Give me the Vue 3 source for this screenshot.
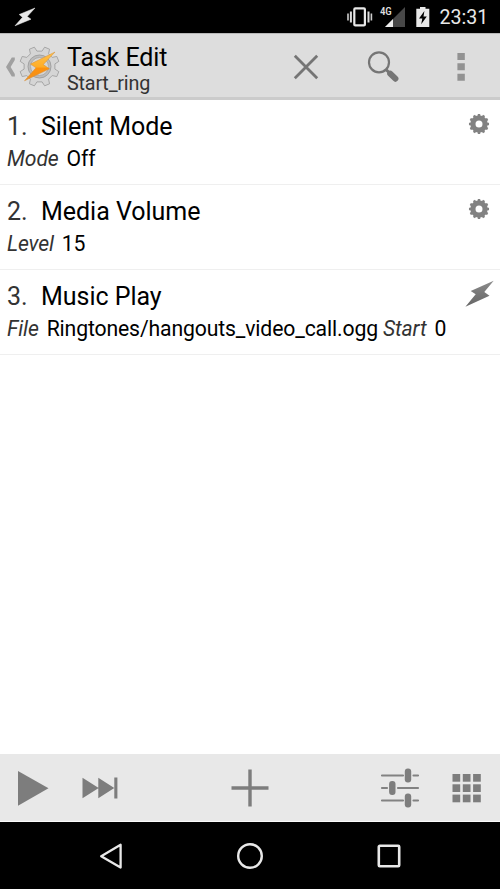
<script setup>
function gearPath(cx, cy, teeth, outer, inner, tipShare, baseShare) {
  const step = (Math.PI * 2) / teeth
  const pts = []
  for (let i = 0; i < teeth; i++) {
    const a = i * step - Math.PI / 2 + (teeth === 8 ? step / 2 : 0)
    for (const [offset, r] of [[-baseShare, inner], [-tipShare, outer], [tipShare, outer], [baseShare, inner]]) {
      const t = a + offset * step
      pts.push(`${(cx + Math.cos(t) * r).toFixed(2)} ${(cy + Math.sin(t) * r).toFixed(2)}`)
    }
  }
  return `M${pts.join('L')}Z`
}

const smallGear = gearPath(15, 14, 12, 10.1, 8.7, 0.22, 0.3) + 'M11.5 14a3.5 3.5 0 1 0 7 0a3.5 3.5 0 1 0 -7 0Z'
const appGear = gearPath(20.5, 20.5, 8, 20, 15.6, 0.17, 0.29)

const actions = [
  { name: 'Silent Mode', icon: 'gear', args: [['Mode', 'Off']] },
  { name: 'Media Volume', icon: 'gear', args: [['Level', '15']] },
  { name: 'Music Play', icon: 'bolt', args: [['File', 'Ringtones/hangouts_video_call.ogg'], ['Start', '0']] }
]
</script>

<template>
  <div class="screen">
    <div class="status">
      <svg class="status-bolt" width="22" height="20" viewBox="0 0 22 20"><path d="M21 1L5.2 7.5L8.5 10.3L1 18.8L17 12.2L13.2 9.5Z" fill="#e8e8e8" stroke="#e8e8e8" stroke-width=".5" /></svg>
      <svg class="vibrate" width="28" height="20" viewBox="0 0 28 20">
        <rect x="8.3" y="1.4" width="10.6" height="17" rx="1" fill="none" stroke="#e8e8e8" stroke-width="2.2" />
        <path d="M4.9 4.5v11M22.5 4.5v11" stroke="#ddd" stroke-width="2" />
        <path d="M2 6.5v7M25.4 6.5v7" stroke="#ccc" stroke-width="1.6" />
      </svg>
      <div class="signal">
        <span class="network">4G</span>
        <svg width="20" height="20" viewBox="0 0 20 20"><path d="M0 20H20V0Z" fill="#484848" /><path d="M0 20H8V12Z" fill="#eee" /></svg>
      </div>
      <svg class="battery" width="14" height="20" viewBox="0 0 14 20">
        <path d="M4 0h5.5v1.8H13.3V20H.3V1.8H4Z" fill="#e8e8e8" />
        <path d="M8.4 4L3 11.6H6.3L5.2 17.2L10.8 9.5H7.5Z" fill="#000" />
      </svg>
      <span class="clock">23:31</span>
    </div>

    <header class="header">
      <svg class="back" width="12" height="24" viewBox="0 0 12 24"><path d="M9.8 2.6L6.8 2.6L1 12L6.8 21.4L9.8 21.4L9.8 19L5.6 12L9.8 5Z" fill="#a0a0a0" /></svg>
      <svg class="app-icon" width="41" height="41" viewBox="0 0 41 41">
        <defs>
          <linearGradient id="orange" x1="0" y1="0" x2="0" y2="1"><stop offset="0" stop-color="#ffc14a" /><stop offset=".52" stop-color="#ffad27" /><stop offset=".56" stop-color="#ff920d" /><stop offset="1" stop-color="#ef9020" /></linearGradient>
        </defs>
        <path :d="appGear" fill="#d5d5d5" stroke="#a0a0a0" stroke-width=".9" stroke-linejoin="round" />
        <circle cx="20.5" cy="20.5" r="11.5" fill="#bcbcbc" stroke="#a2a2a2" />
        <circle cx="20.5" cy="20.5" r="9" fill="#d6d6d6" stroke="#acacac" />
        <path d="M36 6L11.5 18L17 21.8L5.5 34.8L30.5 22.8L24.3 18.6Z" fill="url(#orange)" stroke="#d58f38" stroke-width=".5" />
      </svg>
      <div class="titles">
        <h1>Task Edit</h1>
        <p>Start_ring</p>
      </div>
      <svg class="close" width="26" height="26" viewBox="0 0 26 26"><path d="M1.8 1.8L24.2 24.2M24.2 1.8L1.8 24.2" stroke="#757575" stroke-width="2.8" /></svg>
      <svg class="search" width="34" height="34" viewBox="0 0 34 34">
        <circle cx="12" cy="12.3" r="10" fill="none" stroke="#757575" stroke-width="2.2" />
        <path d="M19 19.5L22 22.5" stroke="#757575" stroke-width="3" /><path d="M23.2 23.6L28.4 28.7" stroke="#757575" stroke-width="6" stroke-linecap="round" />
      </svg>
      <svg class="more" width="8" height="28" viewBox="0 0 8 28"><path d="M.4 0h7.4v7H.4ZM.4 10.2h7.4v7H.4ZM.4 20.7h7.4v7H.4Z" fill="#929292" /></svg>
    </header>

    <main class="list">
      <section v-for="(action, i) in actions" :key="action.name" class="row">
        <div class="line">
          <span class="num">{{ i + 1 }}.</span>
          <span class="name">{{ action.name }}</span>
          <svg v-if="action.icon === 'gear'" class="type" width="30" height="30" viewBox="0 0 30 30"><path :d="smallGear" fill="#828282" fill-rule="evenodd" /></svg>
          <svg v-else class="type" width="30" height="30" viewBox="0 0 30 30">
            <defs><linearGradient id="grey" x1="0" y1="0" x2="0" y2="1"><stop offset="0" stop-color="#8c8c8c" /><stop offset=".5" stop-color="#777" /><stop offset="1" stop-color="#666" /></linearGradient></defs>
            <path d="M29.7 .8L6.7 11L11.7 14.3L1.4 26.8L25.5 15.7L20.3 12Z" fill="url(#grey)" />
          </svg>
        </div>
        <div class="args">
          <template v-for="arg in action.args" :key="arg[0]"><em>{{ arg[0] }}</em><span class="value">{{ arg[1] }}</span></template>
        </div>
      </section>
    </main>

    <footer class="toolbar">
      <svg class="play" width="31" height="35" viewBox="0 0 31 35"><path d="M0 0L30.5 17.3L0 34.7Z" fill="#7d7d7d" /></svg>
      <svg class="skip" width="36" height="22" viewBox="0 0 36 22"><path d="M.5 .8L16.7 11L.5 21.2ZM16.3 .8L32.3 11L16.3 21.2ZM32.3 .5H35.4V21.5H32.3Z" fill="#7d7d7d" /></svg>
      <svg class="add" width="38" height="38" viewBox="0 0 38 38"><path d="M19 .5V37.5M.5 19H37.5" stroke="#7d7d7d" stroke-width="3.4" /></svg>
      <svg class="sliders" width="40" height="42" viewBox="0 0 40 42">
        <path d="M2 8.5H23M33.5 8.5H38M2 21H7M18 21H38M2 33.5H23M33.5 33.5H38" stroke="#828282" stroke-width="2.2" stroke-linecap="round" />
        <rect x="24.8" y="1.4" width="6.4" height="14.2" rx="3" fill="#7d7d7d" /><rect x="9.1" y="13.9" width="6.4" height="14.2" rx="3" fill="#7d7d7d" /><rect x="24.8" y="26.4" width="6.4" height="14.2" rx="3" fill="#7d7d7d" />
      </svg>
      <svg class="grid" width="29" height="29" viewBox="0 0 29 29">
        <template v-for="r in 3" :key="r"><rect v-for="c in 3" :key="c" :x="(c - 1) * 10.3 + 0.5" :y="(r - 1) * 10.3" width="7.7" height="7.7" fill="#7d7d7d" /></template>
      </svg>
    </footer>

    <nav class="nav">
      <svg width="26" height="28" viewBox="0 0 26 28"><path d="M3.2 14.2L22.6 2.8V25.6Z" fill="none" stroke="#e8e8e8" stroke-width="2.3" stroke-linejoin="round" /></svg>
      <svg width="28" height="28" viewBox="0 0 28 28"><circle cx="14" cy="14" r="11.8" fill="none" stroke="#e8e8e8" stroke-width="2.4" /></svg>
      <svg width="26" height="28" viewBox="0 0 26 28"><rect x="2.8" y="3.8" width="20.4" height="20.4" rx="1" fill="none" stroke="#e8e8e8" stroke-width="2.6" /></svg>
    </nav>
  </div>
</template>

<style>
body { margin: 0; background: #fff; }
</style>

<style scoped>
.screen { width: 500px; height: 889px; display: flex; flex-direction: column; overflow: hidden; background: #fff; color: #000; font-family: Roboto, sans-serif; }
svg { display: block; flex: none; }
.status { height: 33px; box-sizing: border-box; flex: none; background: #000; display: flex; align-items: flex-start; padding-top: 7px; }
.status-bolt { margin-left: 14px; }
.vibrate { margin-left: 310px; }
.signal { display: flex; width: 25px; height: 20px; margin-left: 6px; }
.network { width: 5px; color: #ddd; font: 500 11px/10px "Roboto Condensed", Roboto, sans-serif; letter-spacing: -.2px; white-space: nowrap; position: relative; z-index: 1; }
.battery { margin-left: 11px; }
.clock { margin-left: 9.5px; color: #e8e8e8; font-size: 19.6px; line-height: 21px; }
.header { height: 67px; box-sizing: border-box; flex: none; display: flex; align-items: flex-start; background: #ddd; border-top: 1px solid #b8b8b8; border-bottom: 3px solid #cbcbcb; }
.back { margin: 21px 0 0 5px; }
.app-icon { margin: 12px 0 0 2px; }
.titles { width: 226px; margin: 10px 0 0 7px; }
h1, p { margin: 0; font-weight: 400; white-space: nowrap; }
h1 { font-size: 25px; line-height: 28px; letter-spacing: -.1px; }
p { font-size: 19.8px; line-height: 24px; letter-spacing: -.2px; color: #333; }
.close { margin-top: 20px; margin-left: -.5px; }
.search { margin: 16px 0 0 48.5px; }
.more { margin: 19px 0 0 56px; }
.list { flex: 1; }
.row { height: 85px; box-sizing: border-box; border-bottom: 1px solid #efefef; padding: 10px 6px 0 7px; }
.line { display: flex; height: 32px; font-size: 25px; line-height: 34px; letter-spacing: -.03px; }
.num { width: 34px; color: #333; }
.name { flex: 1; }
.args { display: flex; font-size: 21.2px; line-height: 34px; letter-spacing: -.14px; white-space: nowrap; }
.args em { color: #333; margin-right: 8px; }
.args .value { margin-right: 5px; }
.toolbar { height: 68px; box-sizing: border-box; flex: none; display: flex; align-items: center; background: #e8e8e8; padding-top: 1px; border-bottom: 1px solid #fafafa; }
.play { margin-left: 18px; }
.skip { margin-left: 33px; }
.add { margin-left: 113px; }
.sliders { margin-left: 111px; }
.grid { margin-left: 32px; }
.nav { height: 67px; flex: none; display: flex; align-items: center; justify-content: space-between; padding: 0 98px; background: #000; }
</style>
